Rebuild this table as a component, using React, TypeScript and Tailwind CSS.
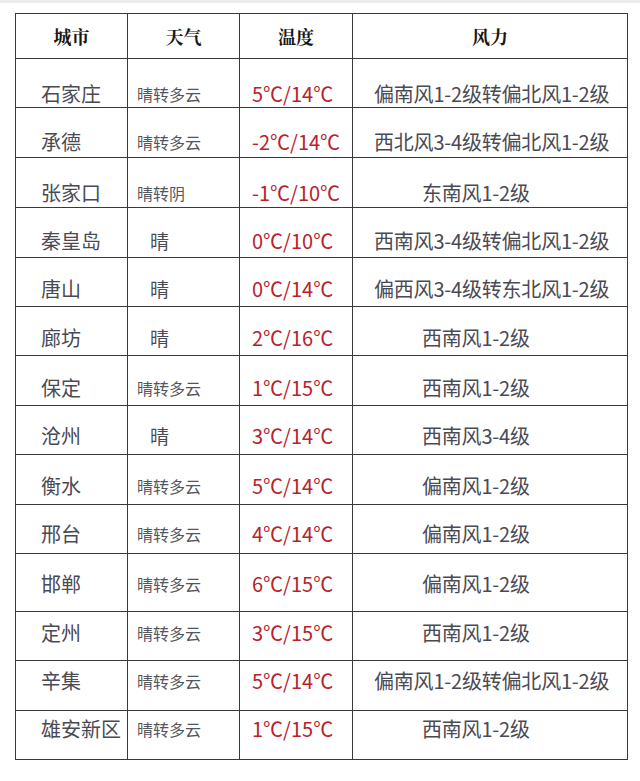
const rows = [
  { city: "石家庄", wx: "晴转多云", temp: "5℃/14℃", wind: "偏南风1-2级转偏北风1-2级", windPad: "pl-[21px]", h: "h-[49px]", pt: "pt-[23px]" },
  { city: "承德", wx: "晴转多云", temp: "-2℃/14℃", wind: "西北风3-4级转偏北风1-2级", windPad: "pl-[21px]", h: "h-[50px]", pt: "pt-[22px]" },
  { city: "张家口", wx: "晴转阴", temp: "-1℃/10℃", wind: "东南风1-2级", windPad: "pl-[69px]", h: "h-[50px]", pt: "pt-[23px]" },
  { city: "秦皇岛", wx: "晴", temp: "0℃/10℃", wind: "西南风3-4级转偏北风1-2级", windPad: "pl-[21px]", h: "h-[50px]", pt: "pt-[21px]" },
  { city: "唐山", wx: "晴", temp: "0℃/14℃", wind: "偏西风3-4级转东北风1-2级", windPad: "pl-[21px]", h: "h-[49px]", pt: "pt-[19px]" },
  { city: "廊坊", wx: "晴", temp: "2℃/16℃", wind: "西南风1-2级", windPad: "pl-[69px]", h: "h-[49px]", pt: "pt-[19px]" },
  { city: "保定", wx: "晴转多云", temp: "1℃/15℃", wind: "西南风1-2级", windPad: "pl-[69px]", h: "h-[50px]", pt: "pt-[20px]" },
  { city: "沧州", wx: "晴", temp: "3℃/14℃", wind: "西南风3-4级", windPad: "pl-[69px]", h: "h-[49px]", pt: "pt-[18px]" },
  { city: "衡水", wx: "晴转多云", temp: "5℃/14℃", wind: "偏南风1-2级", windPad: "pl-[69px]", h: "h-[50px]", pt: "pt-[19px]" },
  { city: "邢台", wx: "晴转多云", temp: "4℃/14℃", wind: "偏南风1-2级", windPad: "pl-[69px]", h: "h-[49px]", pt: "pt-[17px]" },
  { city: "邯郸", wx: "晴转多云", temp: "6℃/15℃", wind: "偏南风1-2级", windPad: "pl-[69px]", h: "h-[58px]", pt: "pt-[18px]" },
  { city: "定州", wx: "晴转多云", temp: "3℃/15℃", wind: "西南风1-2级", windPad: "pl-[69px]", h: "h-[49px]", pt: "pt-[9px]" },
  { city: "辛集", wx: "晴转多云", temp: "5℃/14℃", wind: "偏南风1-2级转偏北风1-2级", windPad: "pl-[21px]", h: "h-[50px]", pt: "pt-[8px]" },
  { city: "雄安新区", wx: "晴转多云", temp: "1℃/15℃", wind: "西南风1-2级", windPad: "pl-[69px]", h: "h-[49px]", pt: "pt-[6px]" },
];

const cell = "border-r border-b border-[#3a3a3a] whitespace-nowrap overflow-hidden";

export default function App() {
  return (
    <div className="w-[640px] h-[781px] bg-white font-['Noto_Sans_CJK_SC','Noto_Sans',sans-serif]">
      <div className="h-[3px] bg-[#ececec]" />
      <div className="ml-[15px] mt-[10px] w-[613px] border-l border-t border-[#3a3a3a]">
        <div className="grid grid-cols-[112px_112px_113px_275px] h-[45px] text-[18px] font-bold text-[#161616] leading-[24px] font-['Noto_Serif_CJK_SC','Noto_Sans_CJK_SC',serif]">
          <div className={`${cell} flex items-center justify-center`}>城市</div>
          <div className={`${cell} flex items-center justify-center`}>天气</div>
          <div className={`${cell} flex items-center justify-center`}>温度</div>
          <div className={`${cell} flex items-center justify-center`}>风力</div>
        </div>
        {rows.map((r) => (
          <div key={r.city} className={`grid grid-cols-[112px_112px_113px_275px] ${r.h} leading-[24px]`}>
            <div className={`${cell} ${r.pt} pl-[25px] text-[20px] text-[#4a4a54]`}>{r.city}</div>
            {r.wx === "晴" ? (
              <div className={`${cell} ${r.pt} pl-[22px] text-[19px] text-[#4a4a54]`}>{r.wx}</div>
            ) : (
              <div className={`${cell} ${r.pt} pl-[9px] text-[16px] text-[#55555c]`}>{r.wx}</div>
            )}
            <div className={`${cell} ${r.pt} pl-[12px] text-[20px] text-[#b8222c]`}>{r.temp}</div>
            <div className={`${cell} ${r.pt} ${r.windPad} text-[20px] tracking-[-0.2px] text-[#4a4a54]`}>{r.wind}</div>
          </div>
        ))}
      </div>
    </div>
  );
}
